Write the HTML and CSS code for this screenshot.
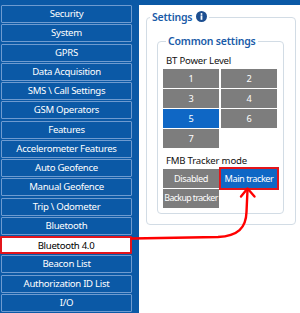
FILE: index.html
```html
<!DOCTYPE html>
<html lang="en">
<head>
    <meta charset="UTF-8">
    <meta name="viewport" content="width=device-width, initial-scale=1.0">
    <title>Bluetooth 4.0</title>
    <link rel="stylesheet" href="styles.css">
</head>
<body>

<div class="app">
    <div class="sidebar">
        <button class="nav">Security</button>
        <button class="nav">System</button>
        <button class="nav">GPRS</button>
        <button class="nav">Data Acquisition</button>
        <button class="nav">SMS \ Call Settings</button>
        <button class="nav">GSM Operators</button>
        <button class="nav">Features</button>
        <button class="nav">Accelerometer Features</button>
        <button class="nav">Auto Geofence</button>
        <button class="nav">Manual Geofence</button>
        <button class="nav">Trip \ Odometer</button>
        <button class="nav">Bluetooth</button>
        <button class="nav active">Bluetooth 4.0</button>
        <button class="nav">Beacon List</button>
        <button class="nav">Authorization ID List</button>
        <button class="nav">I/O</button>
    </div>

    <div class="panel">
        <fieldset class="group">
            <legend class="group-title">Settings
                <svg class="info" width="11" height="11" viewBox="0 0 11 11">
                    <circle cx="5.5" cy="5.5" r="5.5" fill="#1d4f91"/>
                    <circle cx="5.5" cy="2.9" r="1" fill="#fff"/>
                    <rect x="4.6" y="4.4" width="1.8" height="4.4" fill="#fff"/>
                </svg>
            </legend>

            <fieldset class="group inner">
                <legend class="group-title">Common settings</legend>

                <div class="label">BT Power Level</div>
                <div class="choices">
                    <div class="cell">1</div>
                    <div class="cell">2</div>
                    <div class="cell">3</div>
                    <div class="cell">4</div>
                    <div class="cell on">5</div>
                    <div class="cell">6</div>
                    <div class="cell">7</div>
                </div>

                <div class="label">FMB Tracker mode</div>
                <div class="choices">
                    <div class="cell">Disabled</div>
                    <div class="cell on marked">Main tracker</div>
                    <div class="cell tight">Backup tracker</div>
                </div>
            </fieldset>
        </fieldset>
    </div>
</div>

<svg class="arrow" width="300" height="313" viewBox="0 0 300 313">
    <path d="M132 238.5 L218 237 C238 236 246 228 246.5 212 L247.5 190" fill="none" stroke="#f00" stroke-width="2.4" stroke-linecap="round"/>
    <path d="M241 196.5 L247.5 188.5 L254.5 196.5" fill="none" stroke="#f00" stroke-width="2.4" stroke-linecap="round" stroke-linejoin="round"/>
</svg>

</body>
</html>
```

FILE: styles.css
```css
:root{
    --blue: #0b59a6;
    --nav-border: #6e9bd0;
    --cell: #7d7d7d;
    --cell-on: #0f67c5;
    --title: #1a5ba8;
    --line: #d2dce5;
}

*{
    box-sizing: border-box;
    font-family: "Noto Sans", "Open Sans", sans-serif;
}

body{
    margin: 0;
    width: 300px;
    height: 313px;
    overflow: hidden;
    background: var(--blue);
    position: relative;
}

.app{
    display: grid;
    grid-template-columns: 139px 1fr;
    padding-top: 5px;
    height: 100%;
}

.sidebar{
    display: flex;
    flex-direction: column;
    gap: 1.27px;
    padding-left: 1px;
}

.nav{
    width: 131px;
    height: 18px;
    margin: 0;
    padding: 0;
    background: var(--blue);
    border: 1px solid var(--nav-border);
    border-radius: 1px;
    color: #fff;
    font-size: 9.6px;
    letter-spacing: -0.3px;
    line-height: 16px;
    text-align: center;
}

.nav.active{
    background: #fff;
    color: #000;
    border: 2px solid #e3151b;
    margin-left: -1px;
    width: 132px;
}

.panel{
    background: #fff;
    padding: 6px 4px 0 7px;
}

.group{
    margin: 0;
    border: 1px solid var(--line);
    border-radius: 4px;
    padding: 11px 11px 10px 10px;
}

.group-title{
    color: var(--title);
    font-size: 10.5px;
    font-weight: 600;
    letter-spacing: -0.2px;
    line-height: 13px;
    padding: 0 2px;
    margin-left: -7px;
}

.info{
    vertical-align: -1px;
    margin-left: 1px;
}

.inner{
    padding: 6px 5px 5px 5px;
}

.inner .group-title{
    margin-left: 3px;
}

.label{
    font-size: 9.6px;
    letter-spacing: -0.2px;
    line-height: 13px;
    color: #111;
    padding-left: 3px;
    margin-bottom: 2px;
}

.choices{
    display: grid;
    grid-template-columns: 56px 56px;
    grid-auto-rows: 19px;
    gap: 1px 2px;
    margin-bottom: 6px;
}

.choices:last-child{
    margin-bottom: 0;
}

.cell{
    background: var(--cell);
    color: #fff;
    font-size: 9.2px;
    letter-spacing: -0.45px;
    line-height: 19px;
    text-align: center;
    white-space: nowrap;
    overflow: hidden;
}

.cell.tight{
    font-size: 8.8px;
    letter-spacing: -0.6px;
}

.cell.on{
    background: var(--cell-on);
}

.cell.marked{
    outline: 2px solid #e3151b;
    overflow: visible;
}

.arrow{
    position: absolute;
    left: 0;
    top: 0;
    pointer-events: none;
}
```
